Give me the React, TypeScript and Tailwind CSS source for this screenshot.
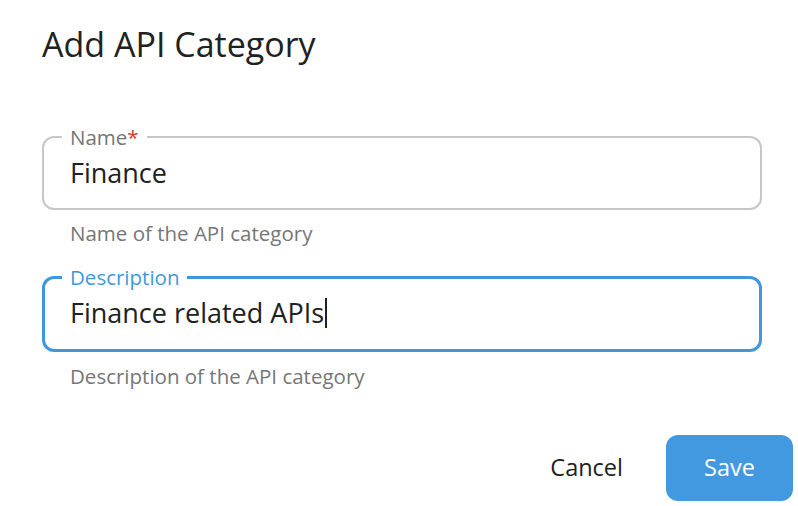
import React from "react"

const FONT = { fontFamily: '"Open Sans", "Noto Sans", sans-serif' }

export default function App() {
  return (
    <div style={FONT} className="h-[506px] w-[798px] overflow-hidden bg-white">
      <div className="pl-[42px] pt-[21px]">
        <h1 className="text-[34px] leading-[46px] font-normal text-[#212121]">Add API Category</h1>

        {/* Name */}
        <fieldset className="mt-[56px] w-[720px] rounded-[12px] border-2 border-[#c7c7c7] px-[26px] pb-[17px]">
          <legend className="ml-[-8px] px-[8px] text-[20.5px] leading-[28px] text-[#767676]">
            Name<span className="text-[#d33a2c]">*</span>
          </legend>
          <div className="pt-[4px] text-[27px] leading-[36px] text-[#212121]">Finance</div>
        </fieldset>
        <p className="mt-[9px] pl-[28px] text-[20.5px] leading-[28px] text-[#767676]">Name of the API category</p>

        {/* Description */}
        <fieldset className="mt-[16px] w-[720px] rounded-[12px] border-[3px] border-[#3f98de] px-[25px] pb-[18px]">
          <legend className="ml-[-8px] px-[8px] text-[20.5px] leading-[28px] text-[#3f98de]">Description</legend>
          <div className="flex items-center pt-[4px] text-[27px] leading-[36px] text-[#212121]">
            Finance related APIs
            <span className="ml-[1px] inline-block h-[30px] w-[2px] bg-[#212121]" />
          </div>
        </fieldset>
        <p className="mt-[10px] pl-[28px] text-[20.5px] leading-[28px] text-[#767676]">Description of the API category</p>

        <div className="mt-[45px] flex items-center justify-end gap-[43px] pr-[5px]">
          <button className="text-[23.5px] text-[#212121]">Cancel</button>
          <button className="h-[66px] w-[127px] rounded-[12px] bg-[#4299df] text-[23.5px] text-white">Save</button>
        </div>
      </div>
    </div>
  )
}
